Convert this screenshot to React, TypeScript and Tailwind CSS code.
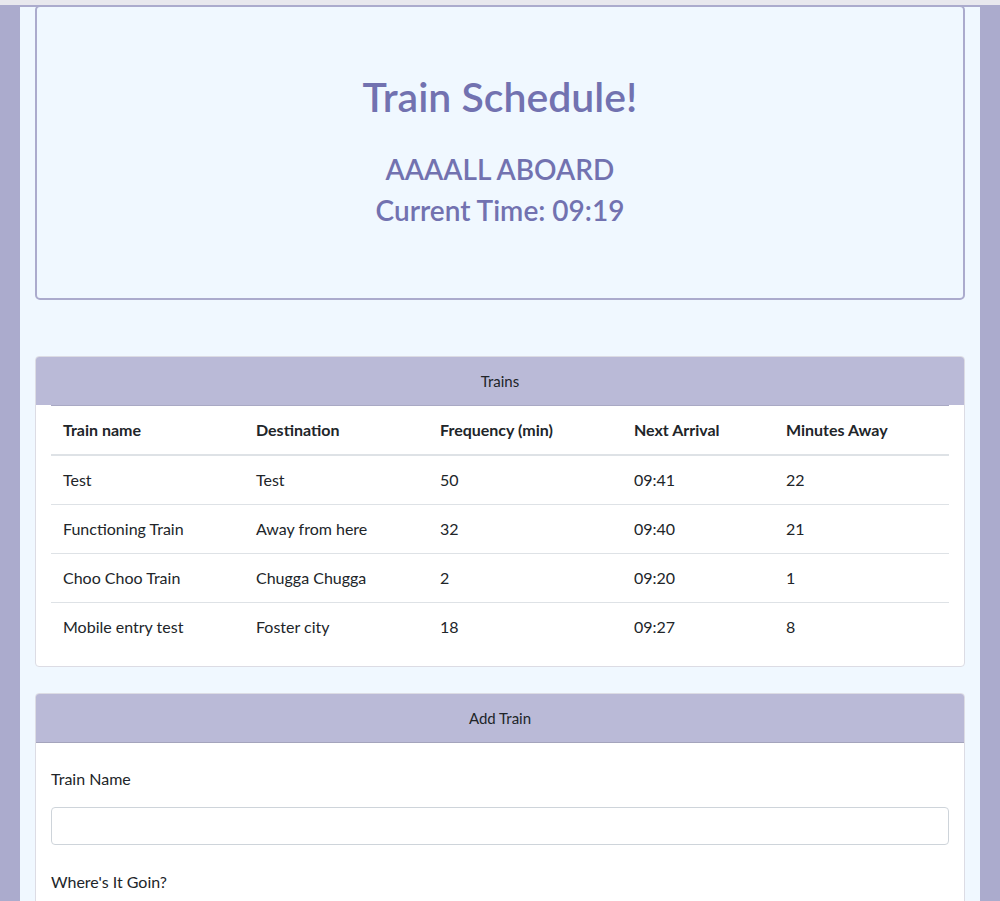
const trains = [
  { name: 'Test', destination: 'Test', frequency: '50', next: '09:41', away: '22' },
  { name: 'Functioning Train', destination: 'Away from here', frequency: '32', next: '09:40', away: '21' },
  { name: 'Choo Choo Train', destination: 'Chugga Chugga', frequency: '2', next: '09:20', away: '1' },
  { name: 'Mobile entry test', destination: 'Foster city', frequency: '18', next: '09:27', away: '8' },
];

const font = { fontFamily: '"Segoe UI", Lato, "Liberation Sans", sans-serif' };

export default function App() {
  return (
    <div className="min-h-[901px] bg-[#ababcd] text-[#212529]" style={font}>
      <div className="h-[5px] bg-[#e8e8ee]" />
      <div className="mx-auto w-[960px] bg-[#f0f8ff] border-t-2 border-[#ababcd] px-[15px] pb-10">
        {/* header */}
        <div className="-mt-[2px] rounded-[5px] border-2 border-[#ababcd] pt-[66px] pb-[71px] mb-[56px] text-center text-[#7272b0]">
          <h1 className="text-[41px] leading-[48px] font-semibold mb-[31px]">Train Schedule!</h1>
          <h3 className="text-[28px] leading-[34px] font-semibold mb-[7px]">AAAALL ABOARD</h3>
          <h3 className="text-[28px] leading-[34px] font-semibold">Current Time: 09:19</h3>
        </div>

        {/* trains */}
        <div className="rounded-[4px] border border-[#dcdce4] bg-white mb-[26px] overflow-hidden">
          <div className="h-[48px] bg-[#babad7] flex items-center justify-center text-[15px]">Trains</div>
          <div className="px-[15px] pb-[15px]">
            <table className="w-full text-[16px] border-t border-[#a9a9c4]">
              <thead>
                <tr className="border-b-2 border-[#dee2e6]">
                  <th className="w-[193px] px-3 py-3 text-left font-bold leading-[24px]">Train name</th>
                  <th className="w-[184px] px-3 py-3 text-left font-bold leading-[24px]">Destination</th>
                  <th className="w-[194px] px-3 py-3 text-left font-bold leading-[24px]">Frequency (min)</th>
                  <th className="w-[152px] px-3 py-3 text-left font-bold leading-[24px]">Next Arrival</th>
                  <th className="px-3 py-3 text-left font-bold leading-[24px]">Minutes Away</th>
                </tr>
              </thead>
              <tbody>
                {trains.map((t, i) => (
                  <tr key={t.name} className={i > 0 ? 'border-t border-[#dee2e6]' : ''}>
                    <td className="px-3 py-3 leading-[24px]">{t.name}</td>
                    <td className="px-3 py-3 leading-[24px]">{t.destination}</td>
                    <td className="px-3 py-3 leading-[24px]">{t.frequency}</td>
                    <td className="px-3 py-3 leading-[24px]">{t.next}</td>
                    <td className="px-3 py-3 leading-[24px]">{t.away}</td>
                  </tr>
                ))}
              </tbody>
            </table>
          </div>
        </div>

        {/* add train */}
        <div className="rounded-[4px] border border-[#dcdce4] bg-white overflow-hidden">
          <div className="h-[49px] bg-[#babad7] border-b border-[#a4a4bc] flex items-center justify-center text-[15px]">Add Train</div>
          <div className="px-[15px] pt-[24px] pb-[15px] text-[16px]">
            <label className="block leading-[24px] mb-[16px]">Train Name</label>
            <input className="block w-full h-[38px] rounded-[4px] border border-[#ced4da] bg-white mb-[25px]" />
            <label className="block leading-[24px] mb-[16px]">Where's It Goin?</label>
            <input className="block w-full h-[38px] rounded-[4px] border border-[#ced4da] bg-white mb-[25px]" />
          </div>
        </div>
      </div>
    </div>
  );
}
